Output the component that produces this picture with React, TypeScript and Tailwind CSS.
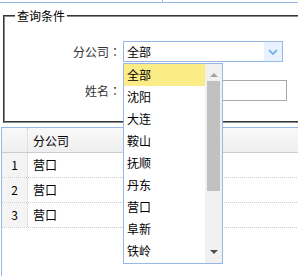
import React from "react";

const cities = ["全部", "沈阳", "大连", "鞍山", "抚顺", "丹东", "营口", "阜新", "铁岭"];
const rows = ["营口", "营口", "营口"];

// 全角冒号在繁体字形里居中，跟原图一致
const Colon = () => <span style={{ fontFamily: '"Noto Sans CJK TC", sans-serif' }}>：</span>;

export default function App() {
  return (
    <div
      className="relative h-[276px] w-[298px] overflow-hidden bg-white text-[12px] leading-4 text-black"
      style={{ fontFamily: '"Noto Sans CJK SC", "Noto Sans", sans-serif' }}
    >
      {/* 顶部残留的面板边 */}
      <div className="flex h-[3px] border-b border-[#95b8e7]">
        <div className="w-[163px] border-r border-[#95b8e7]" />
      </div>

      <fieldset className="mt-[5px] ml-[3px] h-[115px] w-[320px] border-2 border-[#8a8a8a] [border-style:groove]">
        <legend className="ml-[10px] px-[2px] leading-4">查询条件</legend>
        <div className="flex flex-col gap-[18px] pt-[17px]">
          <div className="flex items-center">
            <label className="w-[116px] text-right text-[#333]">
              分公司<Colon />
            </label>
            <div className="ml-[2px] flex h-[21px] w-[160px] border border-[#95b8e7] bg-white">
              <span className="flex-1 pl-[3px] leading-[19px]">全部</span>
              <span className="flex w-[18px] items-center justify-center bg-[#eaf2ff]">
                <svg width="10" height="6" viewBox="0 0 10 6">
                  <path d="M1 1l4 4 4-4" fill="none" stroke="#7cb3ed" strokeWidth="2" />
                </svg>
              </span>
            </div>
          </div>
          <div className="flex items-center">
            <label className="w-[116px] text-right text-[#333]">
              姓名<Colon />
            </label>
            <input className="ml-[2px] h-[21px] w-[164px] border border-[#a9a9a9] outline-none" />
          </div>
        </div>
      </fieldset>

      {/* 数据表格 */}
      <div className="mt-[4px] ml-[1px] h-[160px] w-[320px] border-t border-l border-[#95b8e7]">
        <div className="flex h-[25px] border-b border-[#ccc] bg-gradient-to-b from-[#f9f9f9] to-[#efefef]">
          <div className="w-[26px] border-r border-dotted border-[#ccc]" />
          <div className="pl-[5px] leading-[25px]">分公司</div>
        </div>
        {rows.map((r, i) => (
          <div key={i} className="flex h-[25px] border-b border-dotted border-[#ccc]">
            <div className="w-[26px] border-r border-dotted border-[#ccc] bg-[#f4f4f4] text-center leading-[24px]">
              {i + 1}
            </div>
            <div className="pl-[5px] leading-[24px]">{r}</div>
          </div>
        ))}
      </div>

      {/* 下拉面板 */}
      <div className="absolute top-[63px] left-[123px] flex h-[201px] w-[100px] border border-[#95b8e7] bg-white">
        <ul className="flex-1">
          {cities.map((c, i) => (
            <li
              key={c}
              className={`h-[22px] pl-[3px] leading-[22px] ${i === 0 ? "bg-[#fbec88]" : ""}`}
            >
              {c}
            </li>
          ))}
        </ul>
        <div className="flex w-[17px] flex-col items-center bg-[#f1f1f1]">
          <svg className="mt-[8px]" width="8" height="5" viewBox="0 0 8 5">
            <path d="M0 5L4 1 8 5z" fill="#a3a3a3" />
          </svg>
          <div className="mt-[4px] h-[110px] w-[13px] bg-[#c1c1c1]" />
          <div className="flex-1" />
          <svg className="mb-[8px]" width="8" height="5" viewBox="0 0 8 5">
            <path d="M0 0h8L4 4z" fill="#505050" />
          </svg>
        </div>
      </div>
    </div>
  );
}
